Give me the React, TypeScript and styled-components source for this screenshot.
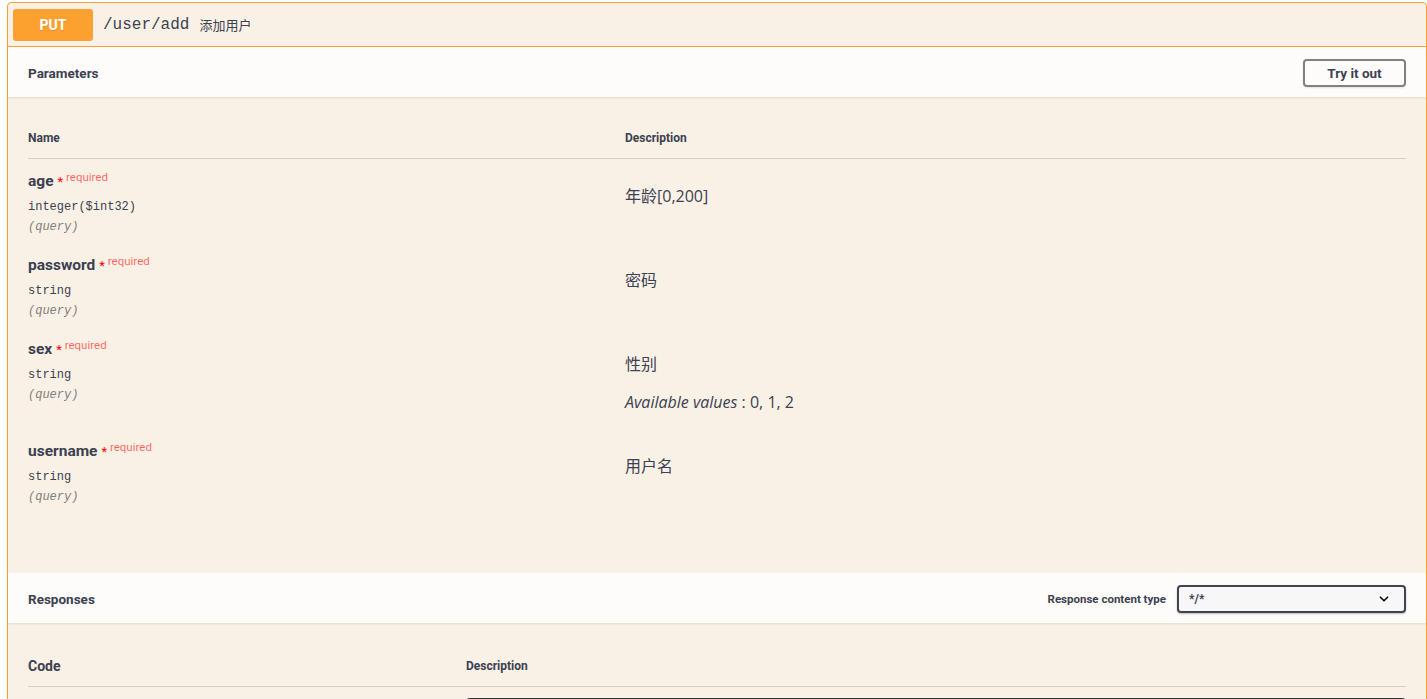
import React from "react";
import styled, { createGlobalStyle } from "styled-components";

const GlobalStyle = createGlobalStyle`
  html, body {
    margin: 0;
    padding: 0;
    background: #ffffff;
    overflow: hidden;
  }
  * {
    box-sizing: border-box;
  }
`;

const heading = `"Roboto", "Liberation Sans", "Noto Sans CJK SC", sans-serif`;
const body = `"Open Sans", "Liberation Sans", "Noto Sans CJK SC", sans-serif`;
const mono = `"Liberation Mono", "DejaVu Sans Mono", monospace`;

type Param = {
  name: string;
  type: string;
  description: string;
  values?: string;
};

const params: Param[] = [
  { name: "age", type: "integer($int32)", description: "年龄[0,200]" },
  { name: "password", type: "string", description: "密码" },
  { name: "sex", type: "string", description: "性别", values: "0, 1, 2" },
  { name: "username", type: "string", description: "用户名" },
];

export default function App() {
  return (
    <>
      <GlobalStyle />
      <Page>
        <OpBlock>
          <Summary>
            <Method>PUT</Method>
            <Path>/user/add</Path>
            <SummaryText>添加用户</SummaryText>
          </Summary>

          <SectionHeader>
            <SectionTitle>Parameters</SectionTitle>
            <TryButton>Try it out</TryButton>
          </SectionHeader>

          <ParamsBody>
            <ParamHead>
              <HeadCell>Name</HeadCell>
              <HeadCell>Description</HeadCell>
            </ParamHead>
            {params.map((p) => (
              <ParamRow key={p.name}>
                <NameCell>
                  <ParamName>
                    {p.name}
                    <Required>
                      <Star>*</Star> required
                    </Required>
                  </ParamName>
                  <ParamType>{p.type}</ParamType>
                  <ParamIn>(query)</ParamIn>
                </NameCell>
                <DescCell>
                  <DescText>{p.description}</DescText>
                  {p.values && (
                    <DescText>
                      <i>Available values</i> : {p.values}
                    </DescText>
                  )}
                </DescCell>
              </ParamRow>
            ))}
          </ParamsBody>

          <SectionHeader>
            <SectionTitle>Responses</SectionTitle>
            <ContentType>
              <ContentLabel>Response content type</ContentLabel>
              <Select>
                <span>*/*</span>
                <svg width="12" height="12" viewBox="0 0 20 20">
                  <path
                    d="M4 7l6 6 6-6"
                    fill="none"
                    stroke="#000"
                    strokeWidth="2.6"
                    strokeLinecap="round"
                    strokeLinejoin="round"
                  />
                </svg>
              </Select>
            </ContentType>
          </SectionHeader>

          <ResponsesBody>
            <ResponseHead>
              <CodeHead>Code</CodeHead>
              <HeadCell>Description</HeadCell>
            </ResponseHead>
            <ResponseRow>
              <div />
              <ExampleBox />
            </ResponseRow>
          </ResponsesBody>
        </OpBlock>
      </Page>
    </>
  );
}

const Page = styled.div`
  padding: 2px 0 0 7px;
`;

const OpBlock = styled.div`
  border: 1px solid #fca130;
  border-radius: 4px;
  background: #faf1e6;
  color: #3b4151;
`;

const Summary = styled.div`
  display: flex;
  align-items: center;
  padding: 5px;
  border-bottom: 1px solid #fca130;
  height: 44px;
`;

const Method = styled.span`
  display: inline-flex;
  align-items: center;
  justify-content: center;
  width: 80px;
  height: 32px;
  border-radius: 3px;
  background: #fca130;
  color: #fff;
  font-family: ${heading};
  font-weight: 700;
  font-size: 14px;
  text-shadow: 0 1px 0 rgba(0, 0, 0, 0.1);
`;

const Path = styled.span`
  margin-left: 10px;
  font-family: ${mono};
  font-size: 16px;
  color: #3b4151;
`;

const SummaryText = styled.span`
  margin-left: 10px;
  font-family: ${body};
  font-size: 13px;
  color: #3b4151;
`;

const SectionHeader = styled.div`
  display: flex;
  align-items: center;
  justify-content: space-between;
  height: 50px;
  padding: 1px 20px 0;
  background: rgba(255, 255, 255, 0.8);
  box-shadow: 0 1px 2px rgba(0, 0, 0, 0.1);
  position: relative;
`;

const SectionTitle = styled.h4`
  margin: 0;
  font-family: ${heading};
  font-size: 13.5px;
  font-weight: 700;
  color: #3b4151;
`;

const TryButton = styled.button`
  width: 103px;
  height: 28px;
  border: 2px solid #808080;
  border-radius: 4px;
  background: transparent;
  box-shadow: 0 1px 2px rgba(0, 0, 0, 0.1);
  font-family: ${heading};
  font-weight: 700;
  font-size: 13.5px;
  color: #3b4151;
  cursor: pointer;
`;

const ParamsBody = styled.div`
  padding: 20px 20px 60px;
`;

const ParamHead = styled.div`
  display: grid;
  grid-template-columns: 597px 1fr;
  padding: 13px 0 11px;
  border-bottom: 1px solid rgba(59, 65, 81, 0.2);
  height: 42px;
`;

const HeadCell = styled.div`
  font-family: ${heading};
  font-size: 12px;
  font-weight: 700;
  line-height: 16px;
  color: #3b4151;
`;

const ParamRow = styled.div`
  display: grid;
  grid-template-columns: 597px 1fr;
`;

const NameCell = styled.div`
  display: flex;
  flex-direction: column;
  padding: 10px 0 7px;
`;

const ParamName = styled.div`
  height: 24px;
  font-family: ${heading};
  font-size: 15.5px;
  font-weight: 700;
  line-height: 24px;
  color: #3b4151;
`;

const Required = styled.span`
  position: relative;
  top: 1px;
  margin-left: 4px;
  font-family: ${heading};
  font-size: 11.5px;
  font-weight: 400;
  line-height: 1;
  vertical-align: top;
  color: rgba(255, 0, 0, 0.6);
`;

const Star = styled.span`
  color: #ff0000;
  font-size: 13px;
  position: relative;
  top: 5px;
`;

const ParamType = styled.div`
  margin-top: 5px;
  font-family: ${mono};
  font-size: 12px;
  line-height: 18px;
  color: #3b4151;
`;

const ParamIn = styled.div`
  margin-top: 2px;
  font-family: ${mono};
  font-size: 12px;
  font-style: italic;
  line-height: 18px;
  color: #808080;
`;

const DescCell = styled.div`
  display: flex;
  flex-direction: column;
  gap: 14px;
  padding: 25px 0 15px;
`;

const DescText = styled.p`
  margin: 0;
  font-family: ${body};
  font-size: 16px;
  line-height: 24px;
  color: #3b4151;
`;

const ContentType = styled.div`
  display: flex;
  align-items: center;
  gap: 11px;
`;

const ContentLabel = styled.label`
  font-family: ${heading};
  font-size: 11.5px;
  font-weight: 700;
  color: #3b4151;
`;

const Select = styled.div`
  display: flex;
  align-items: center;
  justify-content: space-between;
  width: 229px;
  height: 28px;
  padding: 0 14px 0 10px;
  border: 2px solid #41444e;
  border-radius: 4px;
  background: #f7f7f7;
  box-shadow: 0 1px 2px rgba(0, 0, 0, 0.25);
  font-family: ${heading};
  font-size: 12px;
  font-weight: 700;
  color: #3b4151;
`;

const ResponsesBody = styled.div`
  padding: 20px 20px 0;
`;

const ResponseHead = styled.div`
  display: grid;
  grid-template-columns: 438px 1fr;
  align-items: center;
  height: 44px;
  padding-top: 2px;
  border-bottom: 1px solid rgba(59, 65, 81, 0.2);
`;

const CodeHead = styled.div`
  font-family: ${heading};
  font-size: 14px;
  font-weight: 700;
  color: #3b4151;
`;

const ResponseRow = styled.div`
  display: grid;
  grid-template-columns: 438px 1fr;
  padding-top: 11px;
`;

const ExampleBox = styled.div`
  height: 120px;
  border-radius: 4px;
  background: #333333;
`;
